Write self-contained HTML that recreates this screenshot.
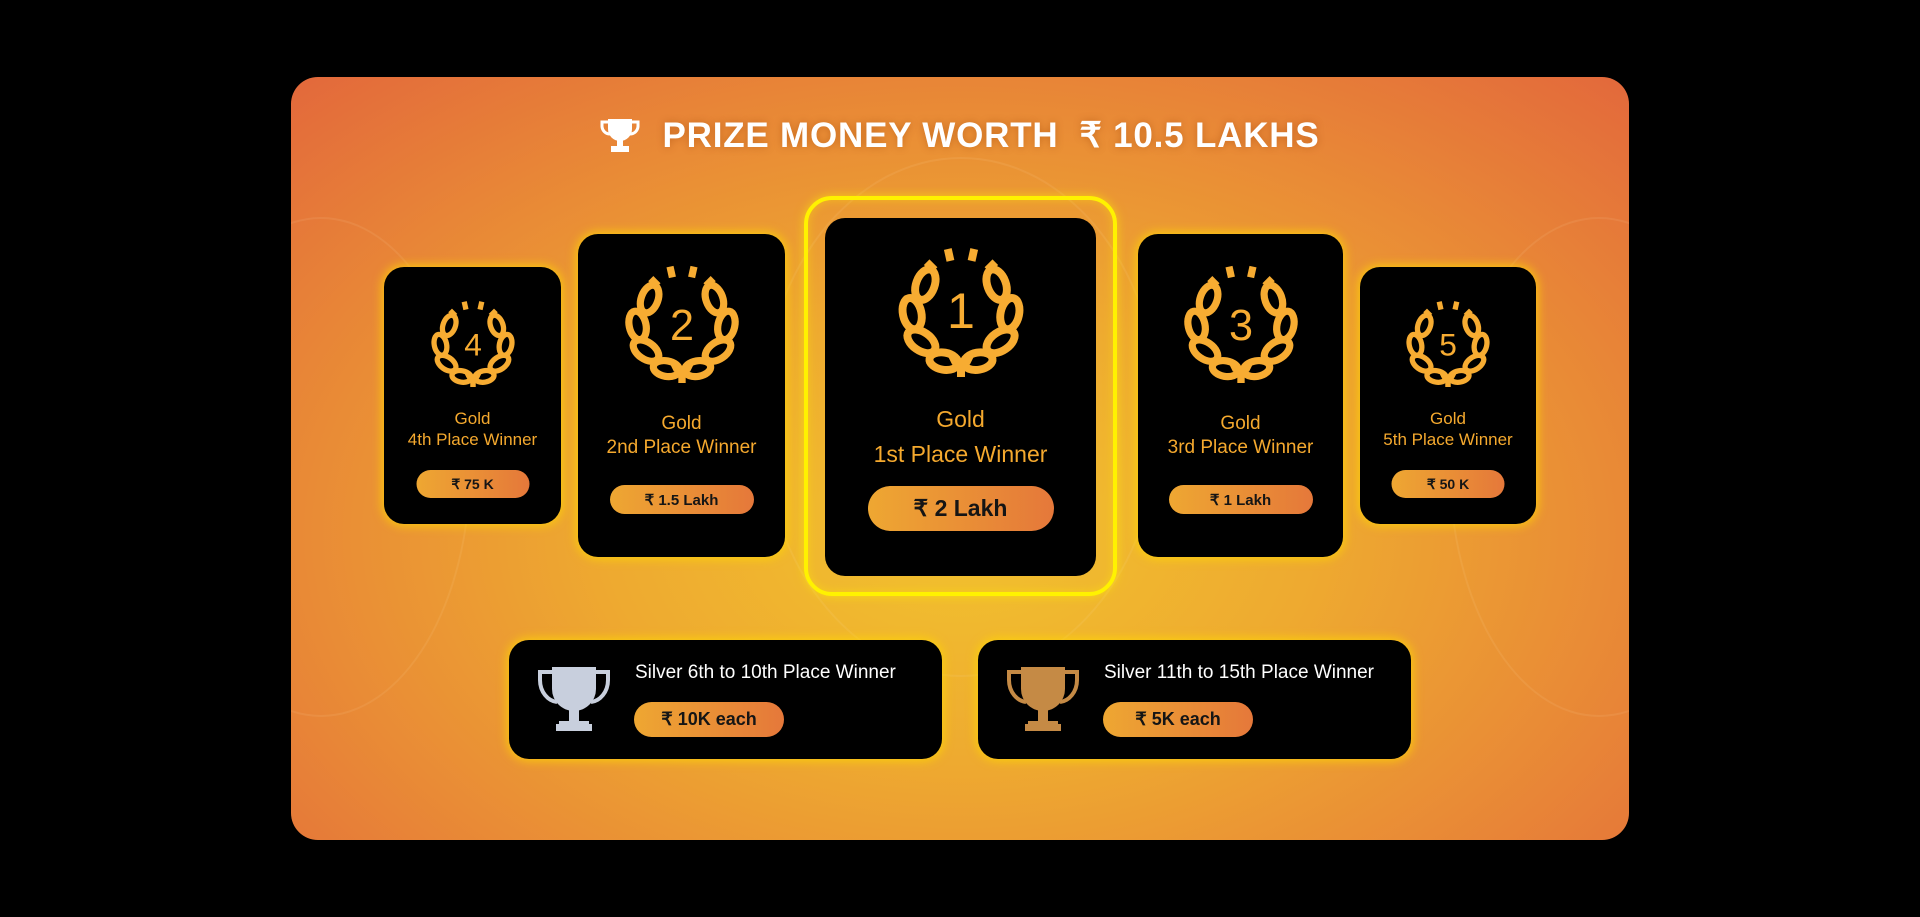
<!DOCTYPE html>
<html><head><meta charset="utf-8">
<style>
*{margin:0;padding:0;box-sizing:border-box}
body{width:1920px;height:917px;background:#000;position:relative;overflow:hidden;font-family:"Liberation Sans",sans-serif}
.main{position:absolute;left:291px;top:77px;width:1338px;height:763px;border-radius:27px;overflow:hidden;
background:radial-gradient(ellipse 75% 85% at 50% 60%,#f2c22e 0%,#eeaa30 35%,#e98b36 65%,#e2653c 100%)}
.title{position:absolute;left:0;width:100%;top:39px;text-align:center;color:#fff;font-weight:bold;font-size:35px;letter-spacing:0.8px;text-shadow:0 0 8px rgba(150,60,0,.4)}
.title svg{vertical-align:-6px;margin-right:22px}
.card{position:absolute;background:#000;border-radius:20px;box-shadow:0 0 10px 2px rgba(255,215,0,.75);text-align:center;color:#f5a92e}
.card svg.l{position:absolute;left:50%;transform:translateX(-50%)}
.t{position:absolute;left:0;width:100%;line-height:1.25}
.pill{position:absolute;left:50%;transform:translateX(-50%);border-radius:20px;background:linear-gradient(90deg,#eea732,#e5783a);color:#151515;font-weight:bold;display:flex;align-items:center;justify-content:center}
.ring{position:absolute;border:4px solid #fff200;border-radius:28px;box-shadow:0 0 10px rgba(255,240,0,.6),inset 0 0 10px rgba(255,240,0,.4)}
.deco{position:absolute;border-radius:50%;border:2px solid rgba(255,230,180,.1)}
</style></head><body>
<svg width="0" height="0" style="position:absolute"><defs>
<g id="lau" fill="none" stroke="#f7ac32" stroke-width="6" stroke-linecap="butt">
<g id="half">
<ellipse cx="23" cy="30" rx="7" ry="12" transform="rotate(20 23 30)"/>
<ellipse cx="13" cy="52" rx="7" ry="12" transform="rotate(-12 13 52)"/>
<ellipse cx="20" cy="73" rx="7" ry="12" transform="rotate(-55 20 73)"/>
<ellipse cx="37" cy="88" rx="6.5" ry="11" transform="rotate(-80 37 88)"/>
<path d="M50 100 V92 Q46 86 42 88"/>
<line x1="24" y1="13" x2="30" y2="19"/>
<line x1="40" y1="3" x2="42" y2="12"/>
</g>
<use href="#half" transform="translate(100 0) scale(-1 1)"/>
</g></defs></svg>
<div class="main">
<div class="deco" style="left:-120px;top:140px;width:300px;height:500px"></div>
<div class="deco" style="right:-120px;top:140px;width:300px;height:500px"></div>
<div class="deco" style="left:470px;top:80px;width:400px;height:520px"></div>
<div class="title"><svg width="40" height="36" viewBox="0 0 40 36"><path d="M8 2h24v10a12 12 0 0 1-24 0z" fill="#fff"/><path d="M8 5H2v4a8 8 0 0 0 8 8M32 5h6v4a8 8 0 0 1-8 8" fill="none" stroke="#fff" stroke-width="3"/><rect x="17" y="22" width="6" height="8" fill="#fff"/><rect x="11" y="29" width="18" height="6" fill="#fff"/></svg>PRIZE MONEY WORTH&nbsp; ₹ 10.5 LAKHS</div>
</div>
<div class="ring" style="left:804px;top:196px;width:313px;height:400px"></div>

<div class="card" style="left:384px;top:267px;width:177px;height:257px">
<svg class="l" style="top:32px" width="88" height="88" viewBox="0 0 100 100"><use href="#lau"/><text x="50" y="64" text-anchor="middle" font-size="36" fill="#f7ac32" font-family="Liberation Sans">4</text></svg>
<div class="t" style="top:141px;font-size:17px">Gold<br>4th Place Winner</div>
<div class="pill" style="top:203px;width:113px;height:28px;font-size:14px">₹ 75 K</div></div>

<div class="card" style="left:578px;top:234px;width:207px;height:323px">
<svg class="l" style="top:29px" width="120" height="120" viewBox="0 0 100 100"><use href="#lau"/><text x="50" y="64" text-anchor="middle" font-size="36" fill="#f7ac32" font-family="Liberation Sans">2</text></svg>
<div class="t" style="top:178px;font-size:19px">Gold<br>2nd Place Winner</div>
<div class="pill" style="top:251px;width:144px;height:29px;font-size:15px">₹ 1.5 Lakh</div></div>

<div class="card" style="left:825px;top:218px;width:271px;height:358px;box-shadow:none">
<svg class="l" style="top:27px" width="134" height="132" viewBox="0 0 100 100"><use href="#lau"/><text x="50" y="63" text-anchor="middle" font-size="38" fill="#f7ac32" font-family="Liberation Sans">1</text></svg>
<div class="t" style="top:184px;font-size:23px;line-height:1.5">Gold<br>1st Place Winner</div>
<div class="pill" style="top:268px;width:186px;height:45px;font-size:23px;border-radius:24px">₹ 2 Lakh</div></div>

<div class="card" style="left:1138px;top:234px;width:205px;height:323px">
<svg class="l" style="top:29px" width="120" height="120" viewBox="0 0 100 100"><use href="#lau"/><text x="50" y="64" text-anchor="middle" font-size="36" fill="#f7ac32" font-family="Liberation Sans">3</text></svg>
<div class="t" style="top:178px;font-size:19px">Gold<br>3rd Place Winner</div>
<div class="pill" style="top:251px;width:144px;height:29px;font-size:15px">₹ 1 Lakh</div></div>

<div class="card" style="left:1360px;top:267px;width:176px;height:257px">
<svg class="l" style="top:32px" width="88" height="88" viewBox="0 0 100 100"><use href="#lau"/><text x="50" y="64" text-anchor="middle" font-size="36" fill="#f7ac32" font-family="Liberation Sans">5</text></svg>
<div class="t" style="top:141px;font-size:17px">Gold<br>5th Place Winner</div>
<div class="pill" style="top:203px;width:113px;height:28px;font-size:14px">₹ 50 K</div></div>

<div class="card" style="left:509px;top:640px;width:433px;height:119px;text-align:left">
<svg style="position:absolute;left:26px;top:25px" width="78" height="67" viewBox="0 0 78 67"><path d="M17 2h44v22a22 22 0 0 1-44 0z" fill="#c8cfdd"/><path d="M17 7H5v8c0 12 8 21 17 22M61 7h12v8c0 12-8 21-17 22" fill="none" stroke="#c8cfdd" stroke-width="4"/><rect x="34" y="44" width="10" height="14" fill="#c8cfdd"/><rect x="24" y="56" width="30" height="3" fill="#c8cfdd"/><rect x="21" y="59" width="36" height="7" fill="#c8cfdd"/></svg>
<div style="position:absolute;left:126px;top:22px;color:#fff;font-size:19px">Silver 6th to 10th Place Winner</div>
<div class="pill" style="left:125px;transform:none;top:62px;width:150px;height:35px;font-size:18px">₹ 10K each</div></div>

<div class="card" style="left:978px;top:640px;width:433px;height:119px;text-align:left">
<svg style="position:absolute;left:26px;top:25px" width="78" height="67" viewBox="0 0 78 67"><path d="M17 2h44v22a22 22 0 0 1-44 0z" fill="#c58a45"/><path d="M17 7H5v8c0 12 8 21 17 22M61 7h12v8c0 12-8 21-17 22" fill="none" stroke="#c58a45" stroke-width="4"/><rect x="34" y="44" width="10" height="14" fill="#c58a45"/><rect x="24" y="56" width="30" height="3" fill="#c58a45"/><rect x="21" y="59" width="36" height="7" fill="#c58a45"/></svg>
<div style="position:absolute;left:126px;top:22px;color:#fff;font-size:19px">Silver 11th to 15th Place Winner</div>
<div class="pill" style="left:125px;transform:none;top:62px;width:150px;height:35px;font-size:18px">₹ 5K each</div></div>
</body></html>
